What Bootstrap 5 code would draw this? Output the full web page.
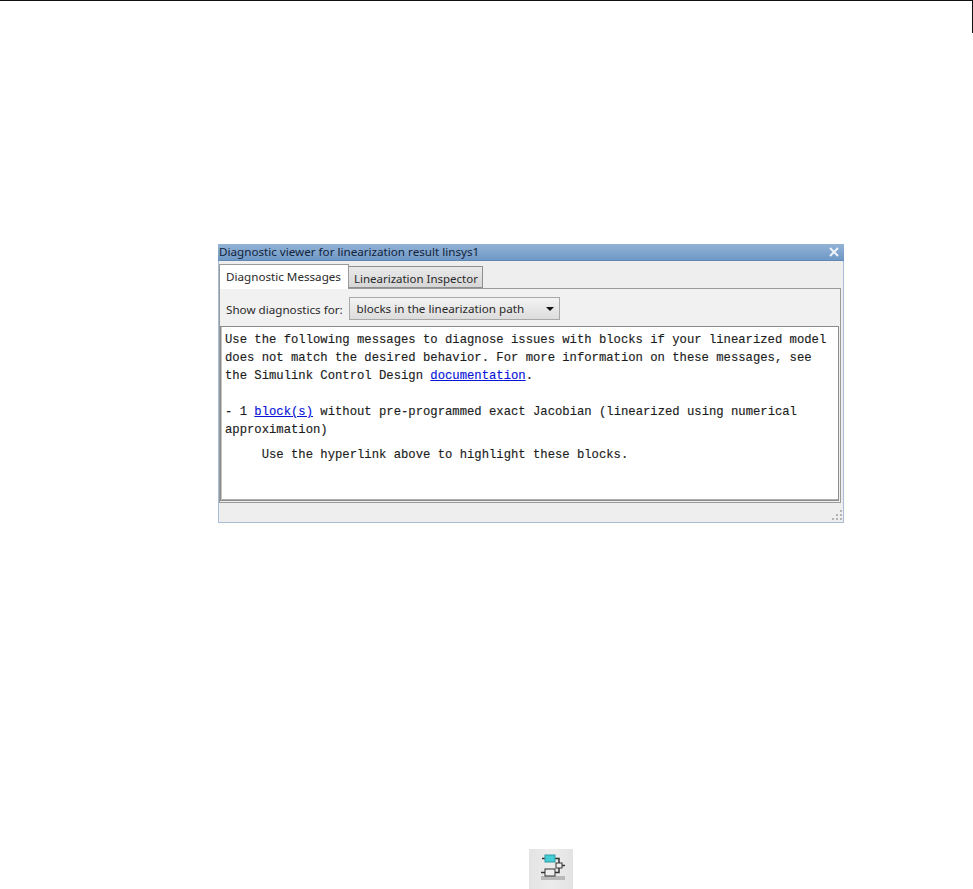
<!DOCTYPE html>
<html lang="en">
<head>
<meta charset="utf-8">
<title>Diagnostic viewer</title>
<link rel="stylesheet" href="https://cdn.jsdelivr.net/npm/bootstrap@5.3.0/dist/css/bootstrap.min.css">
<style>
html,body{background:#fff;margin:0;height:889px;overflow:hidden}
.page-rule{height:33px;border-top:1px solid #111;border-right:1px solid #111}
.stage{padding:211px 0 0 218px}
.dlg{width:626px;height:279px;background:#eee;border:1px solid #a9bed6;border-top:0;font-family:"Noto Sans",sans-serif;font-size:11.65px;color:#2a2a2a}
.dlg-title{height:17px;margin:0 -1px;padding-left:1px;background:linear-gradient(#93b3d6,#6f98c6);border-bottom:1px solid #5f88b5;color:#12233a;line-height:18px;white-space:nowrap}
.dlg-x{width:12px;height:12px;margin-right:4px}
.dlg-tabs{height:27px;padding:3px 0 0 0;white-space:nowrap}
.tab-on{width:130px;height:25px;background:#fff;border:1px solid #9a9a9a;border-bottom:0;padding-left:6px;line-height:23px;position:relative;z-index:1}
.tab-off{width:134px;height:22px;margin-top:2px;background:linear-gradient(#eaeaea,#d6d6d6);border:1px solid #8f8f8f;border-left:0;padding-left:5px;line-height:23px;font-size:11.47px}
.dlg-panel{height:215px;margin:0 2px 0 0;border:1px solid #9a9a9a;background:#f1f1f1}
.dlg-row{height:37px;padding:8px 0 0 6px;gap:6px;line-height:25px;white-space:nowrap}
.combo{width:211px;height:23px;background:linear-gradient(#f3f3f3,#dcdcdc);border:1px solid #a8a8a8;padding-left:7px;line-height:23px}
.combo-arrow{width:0;height:0;border-left:4px solid transparent;border-right:4px solid transparent;border-top:4px solid #111;margin-right:5px}
.msg{height:175px;margin-right:1px;background:#fff;border:1px solid #8a8a8a;box-shadow:inset 1px 0 0 #c4c4c4,inset 0 -1px 0 #b0b0b0;padding:4px 0 0 4px;font-family:"Liberation Mono",monospace;font-size:12.23px;line-height:18px;color:#1c1c1c;white-space:pre;-webkit-text-stroke:.15px #1c1c1c}
.msg a{color:#0a14d8;-webkit-text-stroke:.15px #0a14d8}
.gap-line{height:18px}
.msg-note{margin-top:7px}
.dlg-foot{height:19px}
.grip{width:12px;height:12px;margin:6px 0 0 0}
.tool-wrap{padding:326px 0 0 529px}
.tool-icon{width:44px;height:40px;background:linear-gradient(90deg,#e3e3e3,#ececec 50%,#e3e3e3)}
.tool-icon svg{display:block;filter:blur(.45px)}
</style>
</head>
<body>
<div class="page-rule"></div>
<div class="stage">
  <div class="dlg">
    <div class="dlg-title d-flex justify-content-between align-items-center">
      <span>Diagnostic viewer for linearization result linsys1</span>
      <svg class="dlg-x" viewBox="0 0 12 12"><path d="M2 2l8 8M10 2l-8 8" stroke="#eef3f9" stroke-width="2"/></svg>
    </div>
    <div class="dlg-tabs d-flex">
      <div class="tab-on">Diagnostic Messages</div>
      <div class="tab-off">Linearization Inspector</div>
    </div>
    <div class="dlg-panel">
      <div class="dlg-row d-flex">
        <span>Show diagnostics for:</span>
        <div class="combo d-flex justify-content-between align-items-center">
          <span>blocks in the linearization path</span><span class="combo-arrow"></span>
        </div>
      </div>
      <div class="msg"><div>Use the following messages to diagnose issues with blocks if your linearized model</div><div>does not match the desired behavior. For more information on these messages, see</div><div>the Simulink Control Design <a href="#">documentation</a>.</div><div class="gap-line"></div><div>- 1 <a href="#">block(s)</a> without pre-programmed exact Jacobian (linearized using numerical</div><div>approximation)</div><div class="msg-note">     Use the hyperlink above to highlight these blocks.</div></div>
    </div>
    <div class="dlg-foot d-flex justify-content-end">
      <svg class="grip" viewBox="0 0 12 12" fill="#b4b4b4"><rect x="9" y="1" width="2" height="2"/><rect x="5" y="5" width="2" height="2"/><rect x="9" y="5" width="2" height="2"/><rect x="1" y="9" width="2" height="2"/><rect x="5" y="9" width="2" height="2"/><rect x="9" y="9" width="2" height="2"/></svg>
    </div>
  </div>
</div>
<div class="tool-wrap">
  <div class="tool-icon">
    <svg width="44" height="40" viewBox="0 0 44 40">
      <rect x="12" y="27" width="24" height="4" fill="#999" opacity=".6"/>
      <path d="M13 9.500h3M26 9.500h4v5M33 16.500h3M30 19v4.500h-4M16 23.500h-4" stroke="#333" stroke-width="1.5" fill="none"/>
      <rect x="16" y="6" width="10" height="7" fill="#45cdd6" stroke="#2f9aa5"/>
      <rect x="16" y="20" width="10" height="7" fill="#eee" stroke="#333"/>
      <rect x="27" y="14" width="6" height="5" fill="#eee" stroke="#333"/>
    </svg>
  </div>
</div>
</body>
</html>
